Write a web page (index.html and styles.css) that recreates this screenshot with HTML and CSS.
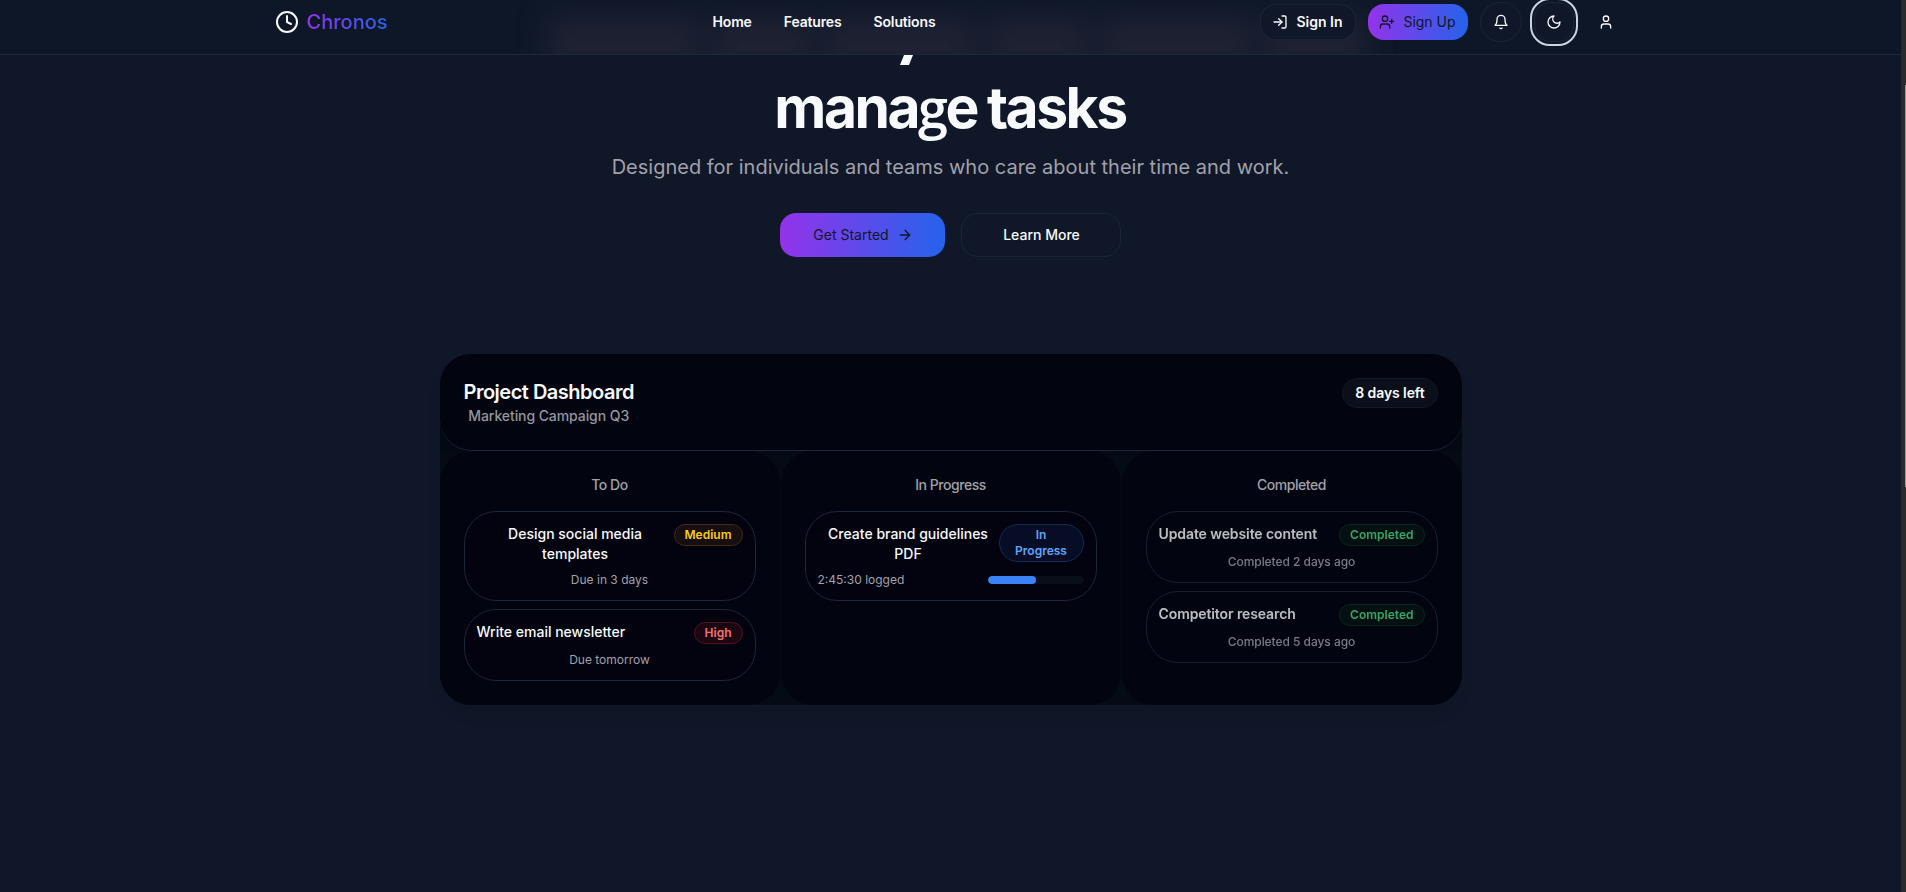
FILE: index.html
```html
<!DOCTYPE html>
<html lang="en">
<head>
<meta charset="utf-8">
<title>Chronos</title>
<link rel="stylesheet" href="styles.css">
</head>
<body>
<div class="page">
  <header class="topbar">
    <div class="glow" aria-hidden="true"><i></i><i></i><i></i><i></i><i></i><i></i></div>
    <div class="topbar-inner">
      <a class="brand">
        <svg class="icon brand-icon" viewBox="0 0 24 24"><circle cx="12" cy="12" r="10"/><path d="M12 6v6l4 2"/></svg>
        <span class="brand-name">Chronos</span>
      </a>
      <nav class="nav"><a>Home</a><a>Features</a><a>Solutions</a></nav>
      <div class="actions">
        <button class="btn btn-signin">
          <svg class="icon" viewBox="0 0 24 24"><path d="M15 3h4a2 2 0 0 1 2 2v14a2 2 0 0 1-2 2h-4"/><path d="m10 17 5-5-5-5"/><path d="M15 12H3"/></svg>
          <span>Sign In</span>
        </button>
        <button class="btn btn-signup">
          <svg class="icon" viewBox="0 0 24 24"><path d="M16 21v-2a4 4 0 0 0-4-4H6a4 4 0 0 0-4 4v2"/><circle cx="9" cy="7" r="4"/><path d="M19 8v6M22 11h-6"/></svg>
          <span>Sign Up</span>
        </button>
        <button class="tool tool-bell"><svg class="icon" viewBox="0 0 24 24"><path d="M6 8a6 6 0 0 1 12 0c0 7 3 9 3 9H3s3-2 3-9"/><path d="M10.3 21a1.94 1.94 0 0 0 3.4 0"/></svg></button>
        <button class="tool tool-focus"><svg class="icon" viewBox="0 0 24 24"><path d="M12 3a6 6 0 0 0 9 9 9 9 0 1 1-9-9Z"/></svg></button>
        <button class="tool tool-plain"><svg class="icon" viewBox="0 0 24 24"><path d="M19 21v-2a4 4 0 0 0-4-4H9a4 4 0 0 0-4 4v2"/><circle cx="12" cy="7" r="4"/></svg></button>
      </div>
    </div>
  </header>

  <main class="main">
    <section class="hero">
      <div class="descender" aria-hidden="true"></div>
      <h1 class="headline">mana<span class="alt-g">g</span>e tasks</h1>
      <p class="lead">Designed for individuals and teams who care about their time and work.</p>
      <div class="cta">
        <button class="btn btn-start"><span>Get Started</span>
          <svg class="icon" viewBox="0 0 24 24"><path d="M5 12h14"/><path d="m12 5 7 7-7 7"/></svg>
        </button>
        <button class="btn btn-more">Learn More</button>
      </div>
    </section>

    <section class="board">
      <div class="board-head">
        <div class="board-title">
          <h2>Project Dashboard</h2>
          <p>Marketing Campaign Q3</p>
        </div>
        <span class="days">8 days left</span>
      </div>
      <div class="columns">
        <div class="column">
          <h3>To Do</h3>
          <div class="tasks">
            <article class="task">
              <div class="task-top"><h4>Design social media templates</h4><span class="badge badge-medium">Medium</span></div>
              <p>Due in 3 days</p>
            </article>
            <article class="task">
              <div class="task-top"><h4>Write email newsletter</h4><span class="badge badge-high">High</span></div>
              <p>Due tomorrow</p>
            </article>
          </div>
        </div>
        <div class="column">
          <h3>In Progress</h3>
          <div class="tasks">
            <article class="task">
              <div class="task-top"><h4>Create brand guidelines PDF</h4><span class="badge badge-progress">In Progress</span></div>
              <div class="logged"><p>2:45:30 logged</p><div class="meter"><div class="meter-fill" style="width:50%"></div></div></div>
            </article>
          </div>
        </div>
        <div class="column">
          <h3>Completed</h3>
          <div class="tasks">
            <article class="task task-done">
              <div class="task-top"><h4>Update website content</h4><span class="badge badge-done">Completed</span></div>
              <p>Completed 2 days ago</p>
            </article>
            <article class="task task-done">
              <div class="task-top"><h4>Competitor research</h4><span class="badge badge-done">Completed</span></div>
              <p>Completed 5 days ago</p>
            </article>
          </div>
        </div>
      </div>
    </section>
  </main>
</div>
<div class="scrollbar"><div class="scroll-thumb"></div></div>
</body>
</html>
```
FILE: styles.css
```css
* { box-sizing: border-box; margin: 0; padding: 0; }

body {
  display: flex;
  height: 892px;
  overflow: hidden;
  background: #101728;
  color: #f8fafc;
  font-family: Inter, "Liberation Sans", sans-serif;
  font-size: 14px;
  line-height: 20px;
}

.page { flex: 1; min-width: 0; }

.icon {
  width: 16px;
  height: 16px;
  flex: none;
  fill: none;
  stroke: currentColor;
  stroke-width: 2;
  stroke-linecap: round;
  stroke-linejoin: round;
}

/* top bar */
.topbar {
  position: relative;
  z-index: 2;
  height: 55px;
  overflow: hidden;
  background: #0e1728;
  border-bottom: 1px solid #1c2937;
}

/* light from the headline passing beneath the bar */
.glow {
  position: absolute;
  left: 548px;
  top: 16px;
  width: 818px;
  height: 62px;
  display: flex;
  gap: 12px;
  filter: blur(14px);
}
.glow i { flex: 3; background: #1e2233; }
.glow i:nth-child(2n) { flex: 2; }

.topbar-inner {
  position: relative;
  display: grid;
  grid-template-columns: 438px auto 1fr;
  align-items: center;
  width: 1352px;
  height: 44px;
  margin: 0 auto;
  padding-right: 1px;
}

.brand { display: flex; align-items: center; gap: 8px; }
.brand-icon { width: 24px; height: 24px; }
.brand-name {
  font-size: 20px;
  line-height: 28px;
  font-weight: 500;
  background: linear-gradient(90deg, #9333ea, #2563eb);
  -webkit-background-clip: text;
  background-clip: text;
  color: transparent;
}

.nav { display: flex; gap: 32px; font-weight: 600; letter-spacing: -.15px; }

.actions { display: flex; align-items: center; justify-content: flex-end; gap: 12px; }

.btn, .tool {
  display: flex;
  align-items: center;
  justify-content: center;
  border: 1px solid transparent;
  background: #101728;
  color: #f8fafc;
  font: 500 14px/20px Inter, sans-serif;
}
.btn { gap: 8px; height: 36px; border-radius: 16px; }
.btn-signin { width: 96px; border-color: #1a2636; font-weight: 600; }
.btn-signup {
  width: 100px;
  border: 0;
  font-weight: 400;
  color: #101728;
  background: linear-gradient(90deg, #9333ea, #2563eb);
}
.tool { width: 40px; height: 40px; border-radius: 20px; border-color: #1a2636; }
.tool-bell { width: 42px; }
.tool-focus { outline: 2px solid #cbd5e1; outline-offset: 2px; border-radius: 16px; }
.tool-plain { background: transparent; border-color: transparent; }

/* hero */
.main { display: flex; flex-direction: column; align-items: center; }
.hero { display: flex; flex-direction: column; align-items: center; }
/* tail of the first headline line, showing under the bar */
.descender {
  width: 9px;
  height: 10px;
  margin-right: 88px;
  background: #f8fafc;
  transform: skewX(-22deg);
}
.headline {
  margin-top: 5px;
  padding-right: 1px;
  font-size: 57px;
  line-height: 75px;
  font-weight: 650;
  letter-spacing: -2.5px;
  word-spacing: -1px;
}
.alt-g { font-family: "Open Sans", sans-serif; font-size: 54px; line-height: 1; }
.lead { margin-top: 8px; font-size: 20px; line-height: 28px; color: #a1a1aa; }
.cta { display: flex; gap: 16px; margin-top: 32px; padding-left: 1px; }
.cta .btn { height: 44px; }
.btn-start {
  width: 165px;
  border: 0;
  font-weight: 400;
  color: #101728;
  background: linear-gradient(90deg, #9333ea, #2563eb);
}
.btn-more { width: 160px; border-color: #1a2636; }

/* dashboard */
.board {
  width: 1024px;
  margin-top: 96px;
  overflow: hidden;
  border: 1px solid #101827;
  border-radius: 32px;
  background: #040812;
  box-shadow: 0 10px 15px -3px rgba(0, 0, 0, .1);
}
.board-head {
  display: flex;
  align-items: flex-start;
  justify-content: space-between;
  height: 97px;
  padding: 24px;
  border-bottom: 1px solid #1c2737;
  border-radius: 32px;
  background: #02050f;
}
.board-title { text-align: center; }
.board-title h2 { font-size: 20px; line-height: 28px; font-weight: 600; letter-spacing: -.5px; }
.board-title p { color: #94969f; font-weight: 500; letter-spacing: -.08px; }
.days {
  padding: 4px 12px;
  border: 1px solid #131a27;
  border-radius: 15px;
  background: #0a0f19;
  font-weight: 600;
  letter-spacing: -.1px;
}

.columns { display: grid; grid-template-columns: repeat(3, 1fr); gap: 1px; background: #050b15; }
.column { height: 254px; padding: 24px; border-radius: 32px; background: #02050f; text-align: center; }
.column h3 { margin-bottom: 16px; font-size: 14px; font-weight: 500; letter-spacing: -.45px; color: #a1a1aa; }
.tasks { display: flex; flex-direction: column; gap: 8px; }
.task { padding: 12px; border: 1px solid #1d2738; border-radius: 32px; background: #02030f; }
.task-top { display: flex; justify-content: space-between; align-items: flex-start; margin-bottom: 8px; }
.task h4 { font-size: 14px; font-weight: 500; }
.task p { font-size: 12px; line-height: 16px; color: #a1a1aa; }
.task-done { opacity: .75; background: transparent; border-color: #202839; }
.task-done h4 { font-weight: 600; letter-spacing: -.1px; }
.task-done p { font-weight: 500; letter-spacing: -.05px; }

.badge {
  flex: none;
  padding: 2px 10px;
  border: 1px solid;
  border-radius: 20px;
  font-size: 12px;
  line-height: 16px;
  font-weight: 600;
}
.badge-medium { color: #facc15; background: #170e10; border-color: #422a14; }
.badge-high { color: #f87171; background: #1c0711; border-color: #4b151e; }
.badge-progress { width: 85px; color: #60a5fa; background: #060d24; border-color: #142a58; }
.badge-done { color: #4ade80; background: #031412; border-color: #0b3322; }

.logged { display: flex; align-items: center; justify-content: space-between; }
.meter { width: 96px; height: 8px; overflow: hidden; border-radius: 4px; background: #090e18; }
.meter-fill { height: 100%; border-radius: 4px; background: #3b82f6; }

.scrollbar { position: relative; z-index: 3; width: 5px; height: 892px; padding: 85px 0 0 4px; background: #2b2b2b; }
.scroll-thumb { height: 402px; background: #9b9b9b; }
```
